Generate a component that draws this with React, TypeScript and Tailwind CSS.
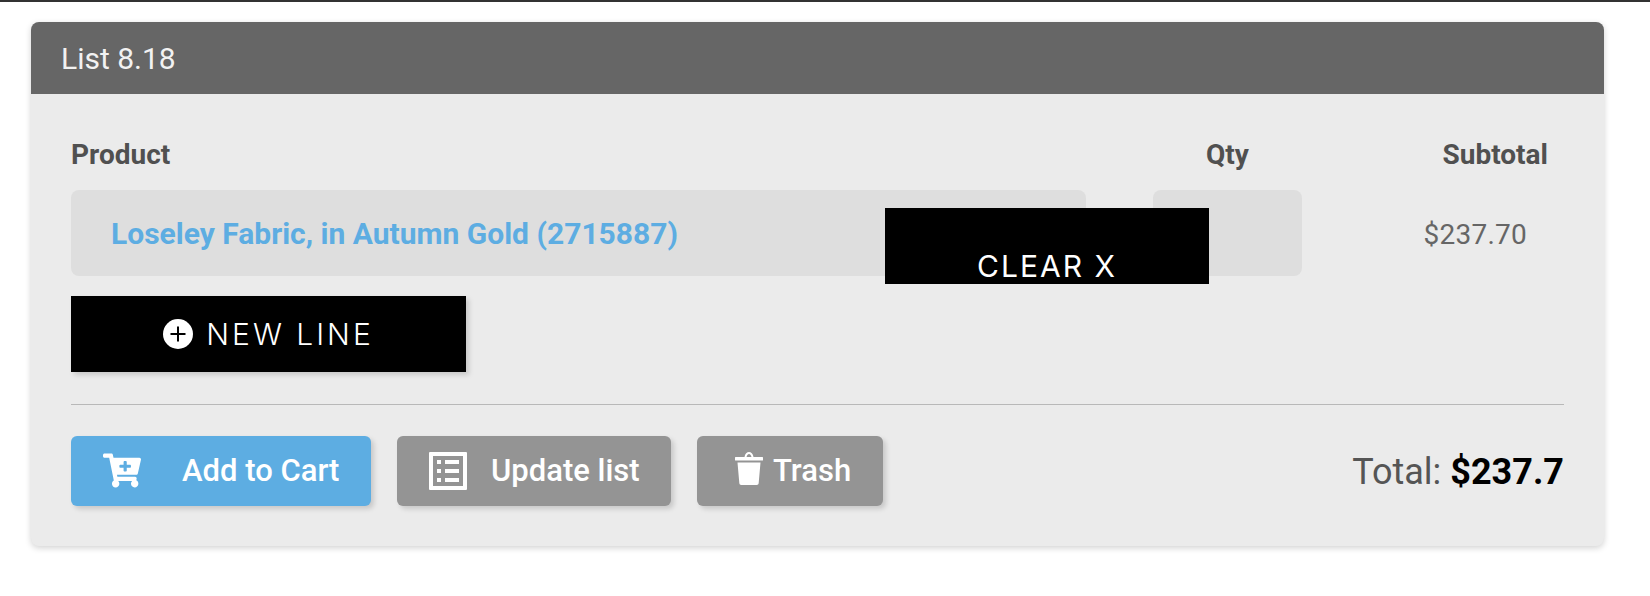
import { FaCartPlus } from "react-icons/fa";

function PlusIcon() {
  return (
    <svg width="30" height="30" viewBox="0 0 30 30">
      <circle cx="15" cy="15" r="15" fill="#fff" />
      <path d="M15 7.5v15M7.5 15h15" stroke="#000" strokeWidth="2" />
    </svg>
  );
}

function ListIcon() {
  return (
    <svg width="38" height="38" viewBox="0 0 38 38" fill="#fff">
      <path
        fillRule="evenodd"
        d="M1 0h36a1 1 0 0 1 1 1v36a1 1 0 0 1-1 1H1a1 1 0 0 1-1-1V1a1 1 0 0 1 1-1zM4 4v30h30V4z"
      />
      <rect x="8" y="8" width="4" height="4" />
      <rect x="8" y="17" width="4" height="4" />
      <rect x="8" y="26" width="4" height="4" />
      <rect x="16" y="8" width="14" height="4" />
      <rect x="16" y="17" width="14" height="4" />
      <rect x="16" y="26" width="14" height="4" />
    </svg>
  );
}

function TrashIcon() {
  return (
    <svg width="28" height="33" viewBox="0 0 28 33" fill="#fff">
      <path d="M9.5 5C10 1.8 12 0 14 0s4 1.8 4.500 5h-2C16 3 15 2 14 2s-2 1-2.500 3z" />
      <rect x="0" y="5" width="28" height="3.500" rx="0.500" />
      <path d="M2.500 10.500h23L23.700 31c-.1 1.200-.8 2-2 2H6.300c-1.200 0-1.900-.8-2-2z" />
    </svg>
  );
}

export default function App() {
  return (
    <div className="min-h-[596px] bg-white border-t-2 border-[#333333] font-['Roboto',sans-serif]">
      <div className="relative mt-[20px] ml-[31px] w-[1573px] h-[524px] rounded-lg bg-[#ebebeb] shadow-[0_2px_6px_rgba(0,0,0,0.18)] overflow-hidden">
        <div className="h-[72px] bg-[#666666] pl-[30px] pt-[1px] flex items-center text-[30px] text-[#f2f2f2]">
          List 8.18
        </div>

        <div className="px-[40px] pt-[40px]">
          <div className="flex h-[56px] text-[28px] font-bold text-[#505050] leading-[42px]">
            <div className="w-[1015px]">Product</div>
            <div className="w-[149px] ml-[67px] text-center">Qty</div>
            <div className="flex-1 text-right pr-[16px]">Subtotal</div>
          </div>

          <div className="flex h-[86px]">
            <div className="w-[1015px] rounded-lg bg-[#dedede] pl-[40px] pt-[1px] flex items-center text-[30px] font-bold text-[#5dade2]">
              Loseley Fabric, in Autumn Gold (2715887)
            </div>
            <div className="w-[149px] ml-[67px] rounded-lg bg-[#dedede]" />
            <div className="flex-1 flex items-center justify-end pr-[37px] pt-[3px] text-[28px] tracking-[0.25px] text-[#666666]">
              $237.70
            </div>
          </div>

          <button className="mt-[20px] w-[395px] h-[76px] bg-black flex items-center justify-center gap-[13px] text-white font-['Inter',sans-serif] font-light text-[30px] tracking-[3px] shadow-[3px_3px_5px_rgba(0,0,0,0.15)]">
            <PlusIcon />
            NEW LINE
          </button>

          <div className="mt-[32px] h-px bg-[#b8b8b8]" />

          <div className="mt-[31px] flex items-center">
            <button className="w-[300px] h-[70px] rounded-md bg-[#5dade2] flex items-center pl-[32px] text-white text-[31px] font-medium shadow-[3px_3px_5px_rgba(0,0,0,0.15)]">
              <FaCartPlus className="w-[38px] h-[35px] mr-[41px] mb-[2px]" />
              Add to Cart
            </button>
            <button className="ml-[26px] w-[274px] h-[70px] rounded-md bg-[#949494] flex items-center pl-[32px] text-white text-[31px] font-medium shadow-[3px_3px_5px_rgba(0,0,0,0.15)]">
              <span className="mr-[24px]">
                <ListIcon />
              </span>
              Update list
            </button>
            <button className="ml-[26px] w-[186px] h-[70px] rounded-md bg-[#949494] flex items-center pl-[38px] text-white text-[31px] font-medium shadow-[3px_3px_5px_rgba(0,0,0,0.15)]">
              <span className="mr-[10px] mb-[5px]">
                <TrashIcon />
              </span>
              Trash
            </button>
            <div className="ml-auto pt-[1px] text-[36px] text-[#555555]">
              Total: <span className="font-bold text-black">$237.7</span>
            </div>
          </div>
        </div>

        <button className="absolute left-[854px] top-[186px] w-[324px] h-[76px] bg-black flex items-end justify-center text-white font-['Inter',sans-serif] text-[30px] tracking-[2px] leading-[36px]">
          CLEAR X
        </button>
      </div>
    </div>
  );
}
